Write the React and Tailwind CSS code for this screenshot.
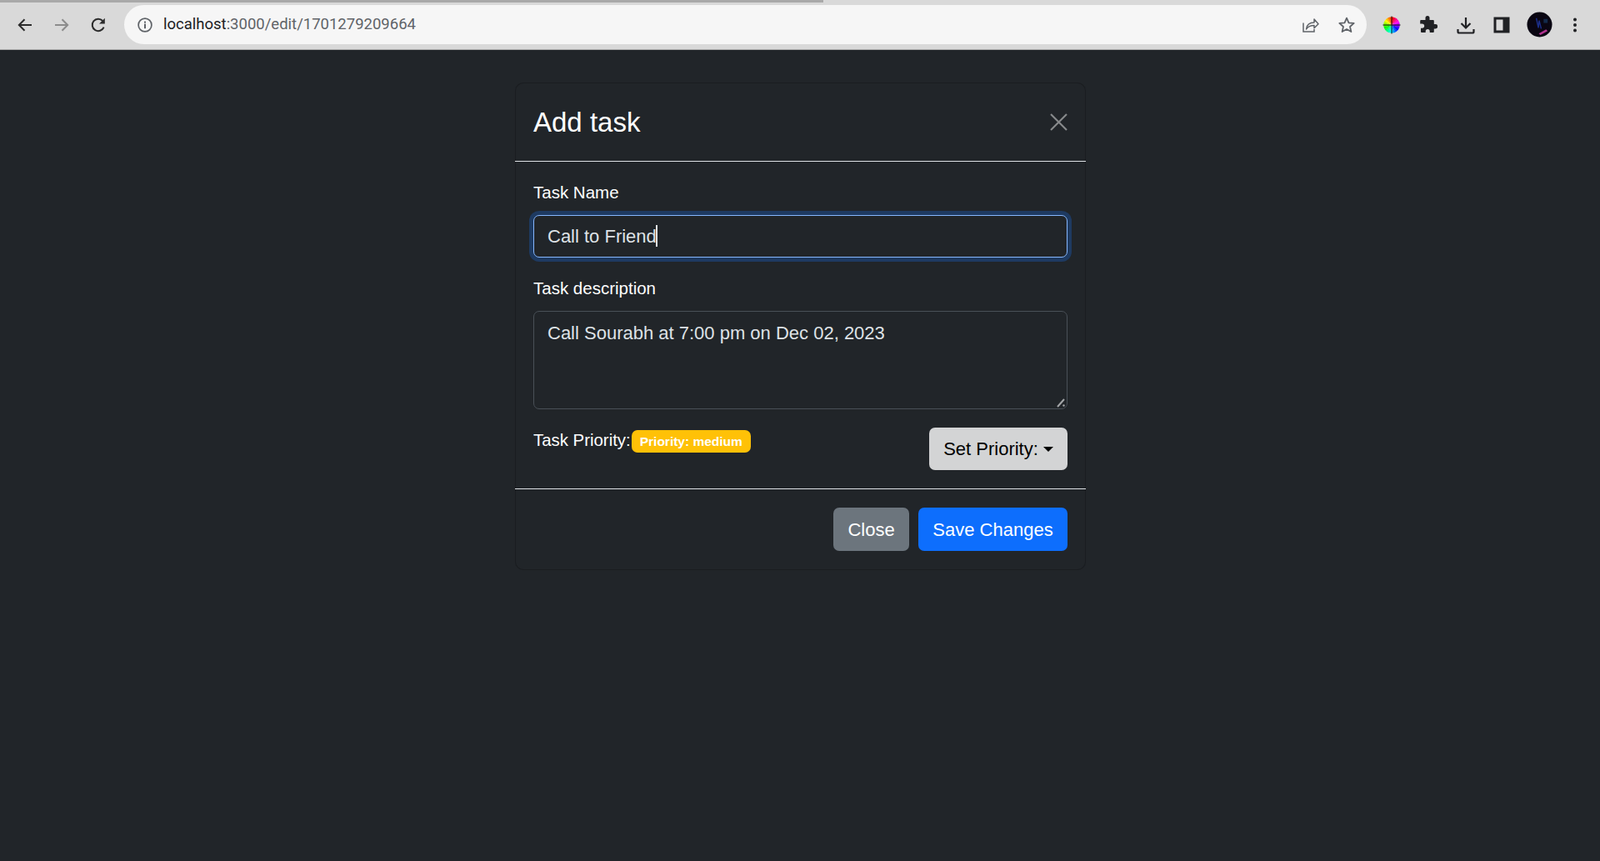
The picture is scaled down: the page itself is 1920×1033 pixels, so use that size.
import { useState } from "react";

const WHEEL_STEPS = 24;

function wedge(index) {
    const step = 360 / WHEEL_STEPS;
    const from = ((index * step - 90) * Math.PI) / 180;
    const to = (((index + 1.1) * step - 90) * Math.PI) / 180;
    return `M12 12 L${12 + 9.7 * Math.cos(from)} ${12 + 9.7 * Math.sin(from)} A9.7 9.7 0 0 1 ${12 + 9.7 * Math.cos(to)} ${12 + 9.7 * Math.sin(to)} Z`;
}

function ToolIcon({ children, className = "" }) {
    return (
        <svg viewBox="0 0 24 24" className={"w-6 h-6 shrink-0 " + className} fill="none">
            {children}
        </svg>
    );
}

function BrowserBar() {
    return (
        <div className="h-[60px] shrink-0 flex flex-col bg-[#d9d9d9] border-b border-[#a8a8a8]">
            <div className="h-[3px] shrink-0">
                <div className="w-[988px] h-full bg-[#a9a9a9]" />
            </div>
            <div className="flex-1 flex items-center pl-[18px] pr-[18px] pb-[3px]">
                <div className="flex items-center gap-5">
                    <ToolIcon className="text-[#2b2b2b]">
                        <path d="M20 12H5M11.5 5.2 4.8 12l6.7 6.8" stroke="currentColor" strokeWidth="2" />
                    </ToolIcon>
                    <ToolIcon className="text-[#8c8c8c]">
                        <path d="M4 12h15M12.5 5.2 19.2 12l-6.7 6.8" stroke="currentColor" strokeWidth="2" />
                    </ToolIcon>
                    <ToolIcon className="text-[#2b2b2b]">
                        <path d="M18.6 14.6A7.2 7.2 0 1 1 17.2 7" stroke="currentColor" strokeWidth="2" />
                        <path d="M19.8 3.8v6.8H13z" fill="currentColor" />
                    </ToolIcon>
                </div>
                <div className="ml-[19px] flex-1 h-[47px] rounded-full bg-[#f6f6f6] flex items-center pl-[13px] pr-3">
                    <ToolIcon className="text-[#5f6368]">
                        <circle cx="12" cy="12" r="7.9" stroke="currentColor" strokeWidth="1.7" />
                        <rect x="11" y="10.6" width="2" height="5.6" fill="currentColor" />
                        <rect x="11" y="7.6" width="2" height="2" fill="currentColor" />
                    </ToolIcon>
                    <div className="ml-[10px] flex-1 font-['Roboto',sans-serif] text-[18.5px] text-[#5f6368]">
                        <span className="text-[#202124]">localhost</span>:3000/edit/1701279209664
                    </div>
                    <div className="flex items-center gap-5">
                        <ToolIcon className="text-[#5f6368]">
                            <path d="M4 9.5V20h13v-3" stroke="currentColor" strokeWidth="1.5" />
                            <path d="M7.5 17c.6-5 4-8 9.5-8V5l5 5.8-5 5V12.600c-4.500 0-7.500 1.400-9.500 4.400z" stroke="currentColor" strokeWidth="1.5" strokeLinejoin="round" />
                        </ToolIcon>
                        <ToolIcon className="text-[#5f6368]">
                            <path d="M12 3.600 14.500 9.300l6.200.6-4.700 4.100 1.400 6.100L12 16.900 6.600 20.100 8 14 3.300 9.900l6.200-.6z" stroke="currentColor" strokeWidth="1.8" strokeLinejoin="round" />
                        </ToolIcon>
                    </div>
                </div>
                <div className="ml-[18px] flex items-center gap-5">
                    <ToolIcon>
                        {Array.from({ length: WHEEL_STEPS }, (_, index) => (
                            <path key={index} d={wedge(index)} fill={`hsl(${360 - index * 15} 100% 50%)`} />
                        ))}
                        <path d="M12 1.500v21M1.500 12h21" stroke="#111" strokeWidth="1" />
                    </ToolIcon>
                    <ToolIcon className="text-[#202124] -translate-x-px">
                        <path d="M9.500 3.500a2.500 2.500 0 0 1 5 0V6h4.300a1 1 0 0 1 1 1v4h1.700a2.700 2.700 0 0 1 0 5.400h-1.700V20a1 1 0 0 1-1 1h-4.100v-1.500a2.500 2.500 0 0 0-5 0V21H5a1 1 0 0 1-1-1v-4.200h1.500a2.700 2.700 0 0 0 0-5.400H3.200V7a1 1 0 0 1 1-1h5.300z" fill="currentColor" />
                    </ToolIcon>
                    <ToolIcon className="text-[#202124] translate-x-px">
                        <path d="M12 3v12M6.500 10l5.500 5.500 5.500-5.500" stroke="currentColor" strokeWidth="2.200" />
                        <path d="M2.500 17v3a1.500 1.500 0 0 0 1.500 1.500h16a1.500 1.500 0 0 0 1.500-1.500v-3" stroke="currentColor" strokeWidth="2.200" />
                    </ToolIcon>
                    <ToolIcon className="text-[#202124]">
                        <path fillRule="evenodd" clipRule="evenodd" d="M2.500 2.500h19v19h-19zM5.500 5.500v13h8v-13z" fill="currentColor" />
                    </ToolIcon>
                    <svg viewBox="0 0 32 32" className="w-[31px] h-[31px] shrink-0 ml-[-2.5px] mr-[-4.5px]">
                        <circle cx="16" cy="16" r="15.500" fill="#0a0612" />
                        <path d="M12 8l2.500 12 1-9 2.500 10" stroke="#1c2f8a" strokeWidth="1.500" fill="none" />
                        <path d="M21 9h5v5h-5z" fill="#132a4a" />
                        <path d="M15 27l9-5 2 2-9 5z" fill="#b0338f" />
                    </svg>
                    <ToolIcon className="text-[#202124]">
                        <circle cx="12" cy="5.500" r="2" fill="currentColor" />
                        <circle cx="12" cy="12" r="2" fill="currentColor" />
                        <circle cx="12" cy="18.500" r="2" fill="currentColor" />
                    </ToolIcon>
                </div>
            </div>
        </div>
    );
}

function TaskModal() {
    const [name, setName] = useState("Call to Friend");
    const [description, setDescription] = useState("Call Sourabh at 7:00 pm on Dec 02, 2023");

    return (
        <div className="mt-[39px] ml-[618px] w-[685px] py-[1px] rounded-[10px] shadow-[inset_0_0_0_1px_#1a1d20] bg-[#212529] text-white">
            <div className="flex items-center justify-between h-[94px] px-[22px] border-b border-[#dee2e6]">
                <h1 className="text-[33px] leading-[49px] font-normal">Add task</h1>
                <svg viewBox="0 0 21 21" className="w-[21px] h-[21px]" fill="none">
                    <path d="M1 1l19 19M20 1 1 20" stroke="#87898b" strokeWidth="2.200" />
                </svg>
            </div>

            <div className="px-[22px] py-[22px]">
                <label className="block text-[20.5px] leading-[30px] mb-3">Task Name</label>
                <div className="relative">
                    <input
                        value={name}
                        onChange={(event) => setName(event.target.value)}
                        className="block w-full h-[51px] px-4 rounded-[7px] bg-[#212529] border border-[#86b7fe] ring-[5px] ring-[#1e3a61] text-[22px] leading-[33px] text-[#dee2e6] outline-none"
                    />
                    <span className="absolute left-[147px] top-[12px] w-[2px] h-[26px] bg-[#dee2e6]" />
                </div>

                <label className="block text-[20.5px] leading-[30px] mt-[22px] mb-3">Task description</label>
                <div className="relative">
                    <textarea
                        value={description}
                        onChange={(event) => setDescription(event.target.value)}
                        className="block w-full h-[118px] px-4 pt-[9px] pb-2 rounded-[7px] bg-[#212529] border border-[#495057] text-[22px] leading-[33px] text-[#dee2e6] outline-none resize-none"
                    />
                    <svg viewBox="0 0 14 14" className="absolute right-[2px] bottom-[2px] w-[14px] h-[14px] pointer-events-none" fill="none">
                        <path d="M4 13l8-9" stroke="#a4a6a8" strokeWidth="2" />
                        <circle cx="11.500" cy="11.500" r="1.200" fill="#a4a6a8" />
                    </svg>
                </div>

                <div className="flex justify-between mt-[22px]">
                    <div className="flex items-start">
                        <span className="text-[20.4px] leading-[30px]">Task Priority:</span>
                        <span className="ml-[1px] mt-[3px] h-[27px] px-[10px] rounded-[7px] bg-[#ffc107] text-[15.500px] leading-[27px] font-bold text-white">
                            Priority: medium
                        </span>
                    </div>
                    <button className="h-[51px] w-[166px] flex items-center justify-center rounded-[7px] bg-[#d3d4d5] text-[22px] text-black">
                        Set Priority:
                        <span className="ml-[6px] w-0 h-0 border-x-[6px] border-x-transparent border-t-[6px] border-t-black" />
                    </button>
                </div>
            </div>

            <div className="flex justify-end gap-[11px] px-[22px] py-[22px] border-t border-[#dee2e6]">
                <button className="h-[52px] w-[91px] rounded-[7px] bg-[#6c757d] text-[22px] text-white">Close</button>
                <button className="h-[52px] w-[179px] rounded-[7px] bg-[#0d6efd] text-[22px] text-white">Save Changes</button>
            </div>
        </div>
    );
}

export default function App() {
    return (
        <div className="h-screen flex flex-col bg-[#212529] font-['Liberation_Sans',Arial,sans-serif] overflow-hidden">
            <BrowserBar />
            <TaskModal />
        </div>
    );
}
